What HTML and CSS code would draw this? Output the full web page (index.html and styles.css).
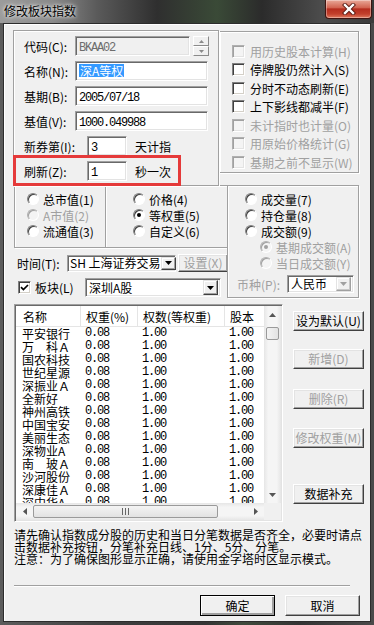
FILE: index.html
```html
<!DOCTYPE html>
<html lang="zh-CN">
<head>
<meta charset="utf-8">
<title>修改板块指数</title>
<link rel="stylesheet" href="styles.css">
</head>
<body>
<div class="window">
  <div class="titlebar">
    <span class="title">修改板块指数</span>
    <div class="close">
      <svg width="14" height="12" viewBox="0 0 14 12">
        <path d="M3 2 L11 10 M11 2 L3 10" stroke="#5a1a12" stroke-width="4.2" stroke-linecap="square"/>
        <path d="M3 2 L11 10 M11 2 L3 10" stroke="#fff" stroke-width="2.4" stroke-linecap="square"/>
      </svg>
    </div>
  </div>
  <div class="frame">
    <div class="client">
      <div class="row-top">
        <div class="group g-fields">
          <div class="frow">
            <span class="lbl">代码(C):</span>
            <div class="input disabled w-code"><span class="mono">BKAA02</span></div>
            <div class="spin">
              <div class="spin-btn"><svg width="5" height="3" viewBox="0 0 5 3"><path d="M0 3 L2.5 0 L5 3Z" fill="#8a8a8a"/></svg></div>
              <div class="spin-btn"><svg width="5" height="3" viewBox="0 0 5 3"><path d="M0 0 L2.5 3 L5 0Z" fill="#8a8a8a"/></svg></div>
            </div>
          </div>
          <div class="frow">
            <span class="lbl">名称(N):</span>
            <div class="input w-long"><span class="sel">深A等权</span></div>
          </div>
          <div class="frow">
            <span class="lbl">基期(B):</span>
            <div class="input w-long"><span class="mono">2005/07/18</span></div>
          </div>
          <div class="frow">
            <span class="lbl">基值(V):</span>
            <div class="input w-long"><span class="mono">1000.049988</span></div>
          </div>
          <div class="frow">
            <span class="lbl lbl-wide">新券第(I):</span>
            <div class="input w-short"><span class="mono">3</span></div>
            <span class="after">天计指</span>
          </div>
          <div class="frow">
            <span class="lbl lbl-wide">刷新(Z):</span>
            <div class="input w-short"><span class="mono">1</span></div>
            <span class="after">秒一次</span>
          </div>
          <div class="highlight"></div>
        </div>
        <div class="group g-checks">
          <div class="chk-row disabled"><span class="chk"></span><span>用历史股本计算(H)</span></div>
          <div class="chk-row"><span class="chk"></span><span>停牌股仍然计入(S)</span></div>
          <div class="chk-row"><span class="chk"></span><span>分时不动态刷新(E)</span></div>
          <div class="chk-row"><span class="chk"></span><span>上下影线都减半(F)</span></div>
          <div class="chk-row disabled"><span class="chk"></span><span>未计指时也计量(O)</span></div>
          <div class="chk-row disabled"><span class="chk"></span><span>用原始价格统计(G)</span></div>
          <div class="chk-row disabled"><span class="chk"></span><span>基期之前不显示(W)</span></div>
        </div>
      </div>

      <div class="row-mid">
        <div class="mid-left">
          <div class="radio-groups">
            <div class="group g-r1">
              <div class="rad-row"><span class="rad"></span><span>总市值(1)</span></div>
              <div class="rad-row disabled"><span class="rad"></span><span>A市值(2)</span></div>
              <div class="rad-row"><span class="rad"></span><span>流通值(3)</span></div>
            </div>
            <div class="group g-r2">
              <div class="rad-row"><span class="rad"></span><span>价格(4)</span></div>
              <div class="rad-row"><span class="rad on"></span><span>等权重(5)</span></div>
              <div class="rad-row"><span class="rad"></span><span>自定义(6)</span></div>
            </div>
          </div>
          <div class="time-row">
            <span class="lbl-time">时间(T):</span>
            <div class="select w-time">
              <span class="val">SH 上海证券交易</span>
              <span class="drop"><svg width="7" height="4" viewBox="0 0 7 4"><path d="M0 0 L7 0 L3.5 4Z" fill="#000"/></svg></span>
            </div>
            <div class="btn disabled w-set">设置(X)</div>
          </div>
          <div class="board-row">
            <span class="chk checked"><svg width="9" height="9" viewBox="0 0 9 9"><path d="M1 4.2 L3.4 6.6 L8 2" stroke="#000" stroke-width="1.7" fill="none"/></svg></span>
            <span class="lbl-board">板块(L)</span>
            <div class="select w-board">
              <span class="val">深圳A股</span>
              <span class="drop"><svg width="7" height="4" viewBox="0 0 7 4"><path d="M0 0 L7 0 L3.5 4Z" fill="#000"/></svg></span>
            </div>
          </div>
        </div>
        <div class="group g-r3">
          <div class="rad-row"><span class="rad"></span><span>成交量(7)</span></div>
          <div class="rad-row"><span class="rad"></span><span>持仓量(8)</span></div>
          <div class="rad-row"><span class="rad"></span><span>成交额(9)</span></div>
          <div class="rad-row sub disabled"><span class="rad on"></span><span>基期成交额(A)</span></div>
          <div class="rad-row sub disabled"><span class="rad"></span><span>当日成交额(Y)</span></div>
          <div class="cur-row">
            <span class="lbl-cur">币种(P):</span>
            <div class="select w-cur">
              <span class="val">人民币</span>
              <span class="drop dis"><svg width="7" height="4" viewBox="0 0 7 4"><path d="M0 0 L7 0 L3.5 4Z" fill="#a0a0a0"/></svg></span>
            </div>
          </div>
        </div>
      </div>

      <div class="row-table">
        <div class="list">
          <div class="list-main">
            <div class="lhead">
              <span class="c1">名称</span><span class="c2">权重(%)</span><span class="c3">权数(等权重)</span><span class="c4">股本</span>
            </div>
            <div class="lrow"><span class="c1">平安银行</span><span class="c2 num">0.08</span><span class="c3 num">1.00</span><span class="c4 num">1.00</span></div>
            <div class="lrow"><span class="c1">万　科Ａ</span><span class="c2 num">0.08</span><span class="c3 num">1.00</span><span class="c4 num">1.00</span></div>
            <div class="lrow"><span class="c1">国农科技</span><span class="c2 num">0.08</span><span class="c3 num">1.00</span><span class="c4 num">1.00</span></div>
            <div class="lrow"><span class="c1">世纪星源</span><span class="c2 num">0.08</span><span class="c3 num">1.00</span><span class="c4 num">1.00</span></div>
            <div class="lrow"><span class="c1">深振业Ａ</span><span class="c2 num">0.08</span><span class="c3 num">1.00</span><span class="c4 num">1.00</span></div>
            <div class="lrow"><span class="c1">全新好</span><span class="c2 num">0.08</span><span class="c3 num">1.00</span><span class="c4 num">1.00</span></div>
            <div class="lrow"><span class="c1">神州高铁</span><span class="c2 num">0.08</span><span class="c3 num">1.00</span><span class="c4 num">1.00</span></div>
            <div class="lrow"><span class="c1">中国宝安</span><span class="c2 num">0.08</span><span class="c3 num">1.00</span><span class="c4 num">1.00</span></div>
            <div class="lrow"><span class="c1">美丽生态</span><span class="c2 num">0.08</span><span class="c3 num">1.00</span><span class="c4 num">1.00</span></div>
            <div class="lrow"><span class="c1">深物业A</span><span class="c2 num">0.08</span><span class="c3 num">1.00</span><span class="c4 num">1.00</span></div>
            <div class="lrow"><span class="c1">南　玻Ａ</span><span class="c2 num">0.08</span><span class="c3 num">1.00</span><span class="c4 num">1.00</span></div>
            <div class="lrow"><span class="c1">沙河股份</span><span class="c2 num">0.08</span><span class="c3 num">1.00</span><span class="c4 num">1.00</span></div>
            <div class="lrow"><span class="c1">深康佳Ａ</span><span class="c2 num">0.08</span><span class="c3 num">1.00</span><span class="c4 num">1.00</span></div>
            <div class="lrow"><span class="c1">深中华A</span><span class="c2 num">0.08</span><span class="c3 num">1.00</span><span class="c4 num">1.00</span></div>
          </div>
          <div class="vscroll">
            <span class="arr"><svg width="7" height="4" viewBox="0 0 7 4"><path d="M0 4 L3.5 0 L7 4Z" fill="#555"/></svg></span>
            <span class="vthumb"></span>
            <span class="vtrack"></span>
            <span class="arr"><svg width="7" height="4" viewBox="0 0 7 4"><path d="M0 0 L7 0 L3.5 4Z" fill="#555"/></svg></span>
          </div>
          <div class="hscroll">
            <span class="harr"><svg width="4" height="7" viewBox="0 0 4 7"><path d="M4 0 L0 3.5 L4 7Z" fill="#555"/></svg></span>
            <span class="hthumb"><svg width="7" height="7" viewBox="0 0 7 7"><path d="M0.5 0 V7 M3.5 0 V7 M6.5 0 V7" stroke="#666" stroke-width="1"/></svg></span>
            <span class="htrack"></span>
            <span class="harr"><svg width="4" height="7" viewBox="0 0 4 7"><path d="M0 0 L4 3.5 L0 7Z" fill="#555"/></svg></span>
          </div>
          <div class="corner"></div>
        </div>
        <div class="side">
          <div class="btn b-def">设为默认(U)</div>
          <div class="btn disabled b-add">新增(D)</div>
          <div class="btn disabled b-del">删除(R)</div>
          <div class="btn disabled b-mod">修改权重(M)</div>
          <div class="btn b-fill">数据补充</div>
        </div>
      </div>

      <div class="note">
        <div class="nline">请先确认指数成分股的历史和当日分笔数据是否齐全，必要时请点</div>
        <div class="nline">击数据补充按钮，分笔补充日线、1分、5分、分笔。</div>
        <div class="nline">注意：为了确保图形显示正确，请使用金字塔时区显示模式。</div>
      </div>
      <div class="sep"></div>
      <div class="footer">
        <div class="btn b-ok">确定</div>
        <div class="btn b-cancel">取消</div>
      </div>
    </div>
  </div>
</div>
</body>
</html>
```

FILE: styles.css
```css
* { box-sizing: border-box; }
html, body { margin: 0; padding: 0; }
body {
  width: 374px; height: 625px; overflow: hidden;
  font-family: "Noto Sans CJK SC", "Noto Sans", sans-serif;
  font-size: 12px; color: #000; background: #3a3a3a;
}
.window {
  width: 374px; height: 625px; display: flex; flex-direction: column;
  background: linear-gradient(90deg, #5c5c5c, #3e3e3e 30%, #353535 55%, #3f4a3c 65%, #343434 80%, #4a4a4a);
}
.titlebar {
  height: 23px; flex: none; display: flex; justify-content: space-between; align-items: flex-start;
  background: linear-gradient(90deg, #9c9c9c 0, #8a8a8a 14%, #5a5a5a 26%, #2f2f2f 42%, #3a4a37 58%, #2b2b2b 70%, #4c4c4c 86%, #3a3a3a 100%);
}
.title {
  padding: 4px 0 0 4px; line-height: 14px; font-size: 12px;
  text-shadow: 0 0 5px #fff, 0 0 3px #ddd;
}
.close {
  width: 47px; height: 19px; margin-right: 2px;
  border: 1px solid #3f1410; border-top: none; border-radius: 0 0 4px 4px;
  background: linear-gradient(#e9a999, #d26552 42%, #b52d1e 50%, #c2402c 78%, #df7a5f);
  display: flex; align-items: center; justify-content: center;
  box-shadow: inset 0 0 0 1px rgba(255,255,255,0.35);
}
.frame { flex: 1; display: flex; padding: 0 3px 3px 3px; }
.client {
  flex: 1; background: #f0f0f0;
  border: 1px solid #2c2c2c; box-shadow: inset 1px 1px #fff;
  padding: 6px 0 0 9px; display: flex; flex-direction: column;
}

/* generic */
.group { border: 1px solid #a0a0a0; box-shadow: inset 1px 1px #fff, 1px 1px #fff; }
.disabled, .disabled span { color: #a0a0a0; }
.mono { font-family: "Liberation Mono", monospace; font-size: 12px; letter-spacing: -1.2px; }

.input {
  height: 20px; border: 1px solid; border-color: #a0a0a0 #fff #fff #a0a0a0;
  box-shadow: inset 1px 1px #696969, inset -1px -1px #e3e3e3;
  background: #fff; padding: 0 0 0 3px; line-height: 17px; white-space: nowrap; overflow: hidden;
}
.input.disabled { background: #f0f0f0; }
.input.disabled .mono { color: #6d6d6d; }
.sel { background: #3399ff; color: #fff; display: inline-block; line-height: 13px; padding: 0 1px; margin-top: 2px; }

.btn {
  height: 20px; border: 1px solid; border-color: #fff #404040 #404040 #fff;
  box-shadow: inset -1px -1px #a0a0a0, inset 1px 1px #e3e3e3;
  background: #f0f0f0; display: flex; align-items: center; justify-content: center;
  white-space: nowrap; line-height: 14px;
}

.chk {
  width: 13px; height: 13px; flex: none; display: inline-flex; align-items: center; justify-content: center;
  border: 1px solid; border-color: #808080 #fff #fff #808080;
  box-shadow: inset 1px 1px #404040, inset -1px -1px #d4d0c8; background: #fff;
}
.disabled .chk {
  border-color: #b0b0b0 #fff #fff #b0b0b0;
  box-shadow: inset 1px 1px #a0a0a0, inset -1px -1px #e3e3e3; background: #f4f4f4;
}
.rad {
  width: 12px; height: 12px; flex: none; border-radius: 50%; position: relative;
  border: 1px solid; border-color: #808080 #fff #fff #808080;
  box-shadow: inset 1px 1px #404040; background: #fff;
}
.rad.on::after {
  content: ""; position: absolute; left: 3px; top: 3px; width: 4px; height: 4px;
  border-radius: 50%; background: #000;
}
.disabled .rad { border-color: #b0b0b0 #fff #fff #b0b0b0; box-shadow: inset 1px 1px #a0a0a0; background: #f4f4f4; }
.disabled .rad.on::after { background: #a0a0a0; }

.select {
  display: flex; align-items: center; border: 1px solid; border-color: #a0a0a0 #fff #fff #a0a0a0;
  box-shadow: inset 1px 1px #696969, inset -1px -1px #e3e3e3; background: #fff;
  padding: 1px 2px;
}
.select .val { flex: 1; padding-left: 1px; line-height: 14px; white-space: nowrap; }
.drop {
  width: 15px; align-self: stretch; flex: none; display: flex; align-items: center; justify-content: center;
  border: 1px solid; border-color: #e3e3e3 #404040 #404040 #e3e3e3;
  box-shadow: inset -1px -1px #a0a0a0, inset 1px 1px #fff; background: #f0f0f0;
}

/* top row */
.row-top { display: flex; height: 156px; flex: none; }
.g-fields {
  position: relative; width: 206px; height: 156px;
  padding: 5px 0 0 10px; display: flex; flex-direction: column; gap: 5px;
}
.frow { display: flex; align-items: center; height: 20px; }
.lbl { width: 51px; flex: none; white-space: nowrap; }
.lbl-wide { width: 63px; }
.w-code { width: 115px; }
.w-long { width: 133px; }
.w-short { width: 40px; }
.after { margin-left: 8px; }
.spin { margin-left: 3px; width: 16px; height: 20px; display: flex; flex-direction: column; }
.spin-btn {
  height: 10px; display: flex; align-items: center; justify-content: center;
  border: 1px solid; border-color: #fff #8a8a8a #8a8a8a #fff; background: #f0f0f0;
}
.highlight {
  position: absolute; left: -1px; top: 124px; width: 168px; height: 31px;
  border: 3px solid #e53a3a;
}

.g-checks { width: 140px; height: 142px; margin-top: 1px; padding: 10px 0 0 12px; }
.chk-row { display: flex; align-items: center; height: 18.5px; white-space: nowrap; }
.chk-row .chk { margin-right: 5px; }

/* middle */
.row-mid { display: flex; margin: -1px 0 0 1px; height: 113px; flex: none; }
.mid-left { width: 214px; display: flex; flex-direction: column; }
.radio-groups { display: flex; height: 63px; }
.g-r1 { width: 92px; height: 63px; padding: 5px 0 0 12px; }
.g-r2 { width: 123px; height: 63px; margin-left: -1px; padding: 5px 0 0 27px; }
.g-r3 { width: 132px; height: 113px; margin-left: -1px; padding: 5px 0 0 17px; }
.rad-row { display: flex; align-items: center; height: 16px; white-space: nowrap; }
.rad-row .rad { margin-right: 4px; }
.rad-row.sub { margin-left: 15px; }
.cur-row { display: flex; align-items: center; margin: 4px 0 0 -8px; height: 18px; }
.lbl-cur { width: 50px; color: #a0a0a0; white-space: nowrap; }
.w-cur { width: 67px; height: 18px; }
.drop.dis { box-shadow: inset -1px -1px #c8c8c8, inset 1px 1px #fff; border-color: #e3e3e3 #a0a0a0 #a0a0a0 #e3e3e3; }

.time-row { display: flex; align-items: center; margin-top: 6px; height: 18px; padding-left: 3px; }
.lbl-time { width: 50px; white-space: nowrap; }
.w-time { width: 109px; height: 17px; padding: 1px 1px; }
.w-set { width: 50px; height: 18px; margin-left: 2px; }
.board-row { display: flex; align-items: center; margin-top: 6px; height: 19px; padding-left: 4px; }
.lbl-board { width: 50px; margin-left: 4px; white-space: nowrap; }
.w-board { width: 136px; height: 19px; }

/* table */
.row-table { display: flex; margin: 6px 0 0 1px; height: 218px; flex: none; }
.list {
  width: 269px; height: 218px; padding: 1px;
  border: 1px solid; border-color: #a0a0a0 #fff #fff #a0a0a0;
  box-shadow: inset 1px 1px #696969, inset -1px -1px #e3e3e3;
  background: #fff;
  display: grid; grid-template-columns: 248px 17px; grid-template-rows: 197px 17px;
}
.list-main { overflow: hidden; }
.lhead { display: flex; height: 21px; border-bottom: 1px solid #e5e5e5; align-items: stretch; }
.lhead span { display: flex; align-items: center; border-right: 1px solid #e5e5e5; padding-left: 5px; white-space: nowrap; }
.lhead .c1 { padding-left: 7px; }
.lhead .c4 { border-right: none; }
.c1 { width: 65px; flex: none; padding-left: 6px; }
.c2 { width: 57px; flex: none; padding-left: 4px; }
.c3 { width: 87px; flex: none; padding-left: 4px; }
.c4 { flex: 1; padding-left: 4px; }
.lrow { display: flex; height: 13px; line-height: 13px; white-space: nowrap; }
.num { font-family: "Liberation Mono", monospace; font-size: 12px; letter-spacing: -1.2px; }
.lrow .c2, .lrow .c3, .lrow .c4 { padding-left: 4px; }

.vscroll {
  display: flex; flex-direction: column; align-items: center;
  background: linear-gradient(90deg, #e6e6e6, #f5f5f5 25%, #f5f5f5 75%, #e6e6e6);
}
.arr { height: 17px; flex: none; display: flex; align-items: center; justify-content: center; }
.vthumb {
  width: 13px; height: 13px; margin-top: 4px; flex: none;
  border: 1px solid #9a9a9a; border-radius: 2px;
  background: linear-gradient(90deg, #f4f4f4, #e2e2e2);
}
.vtrack { flex: 1; }
.hscroll {
  display: flex; align-items: center;
  background: linear-gradient(#e6e6e6, #f5f5f5 25%, #f5f5f5 75%, #e6e6e6);
}
.harr { width: 17px; flex: none; display: flex; align-items: center; justify-content: center; height: 17px; }
.hthumb {
  width: 185px; height: 13px; flex: none; display: flex; align-items: center; justify-content: center;
  border: 1px solid #9a9a9a; border-radius: 2px;
  background: linear-gradient(#f4f4f4, #e2e2e2);
}
.htrack { flex: 1; }
.corner { background: #f0f0f0; }

.side { margin-left: 10px; width: 71px; display: flex; flex-direction: column; }
.side .btn { height: 20px; flex: none; }
.b-def { margin-top: 7px; }
.b-add { margin-top: 18px; }
.b-del { margin-top: 20px; }
.b-mod { margin-top: 19px; }
.b-fill { margin-top: 36px; }

/* bottom */
.note { margin: 7px 0 0 1px; flex: none; }
.nline { height: 12px; line-height: 12px; white-space: nowrap; }
.sep { margin: 20px 0 0 1px; width: 336px; height: 2px; border-top: 1px solid #a0a0a0; border-bottom: 1px solid #fff; flex: none; }
.footer { display: flex; gap: 10px; margin: 8px 0 0 187px; flex: none; }
.footer .btn { width: 75px; height: 21px; }
.b-ok { border-color: #000; box-shadow: inset 1px 1px #fff, inset -2px -2px #a0a0a0, inset -1px -1px #404040; }
```
